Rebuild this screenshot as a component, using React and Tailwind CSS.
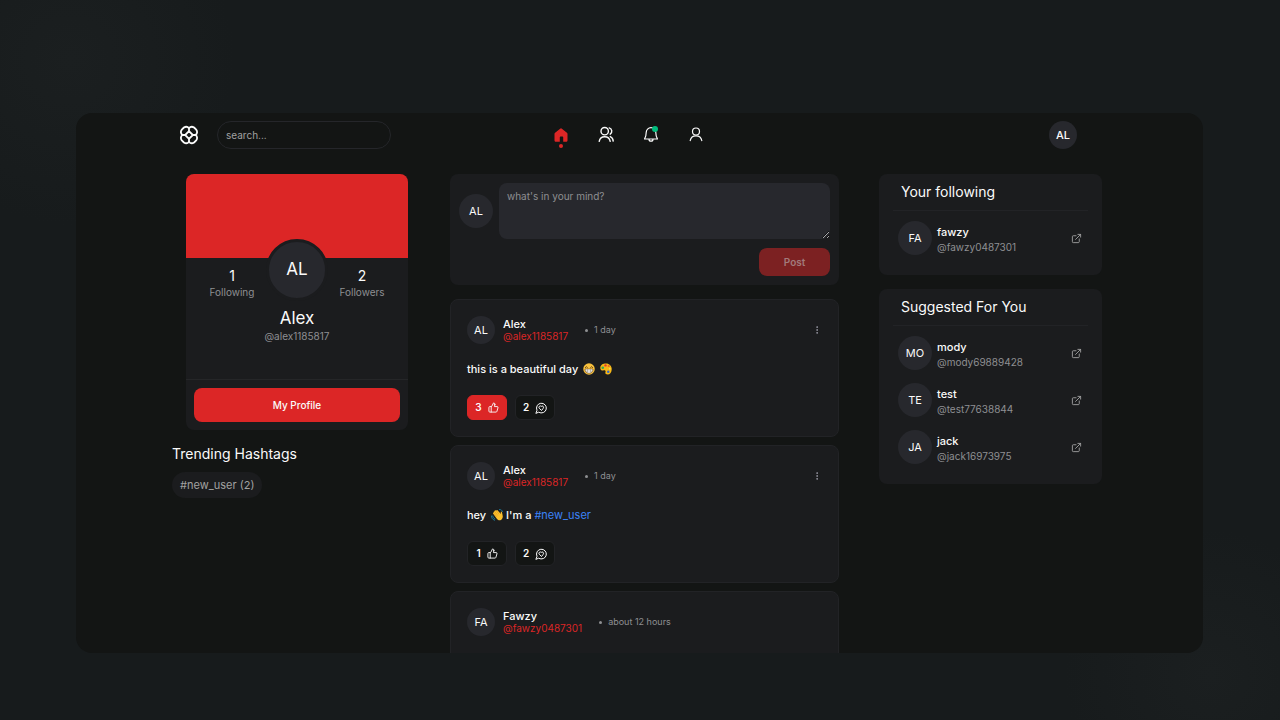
import React from "react";
import { ThumbsUp, ExternalLink, EllipsisVertical } from "lucide-react";

function Logo() {
  return (
    <svg className="size-5" viewBox="0 0 20 20" fill="none" stroke="#fafafa" strokeWidth="1.8" strokeLinejoin="round" strokeLinecap="round" aria-hidden="true">
      <path d="M10 3.300C8.800 1.700 6.600 1.400 4.900 2.500L2.800 4.600C1.400 6.300 1.700 8.700 3.300 10 1.700 11.300 1.400 13.700 2.800 15.400L4.900 17.500C6.600 18.600 8.800 18.300 10 16.700 11.200 18.300 13.400 18.600 15.100 17.500L17.200 15.400C18.600 13.700 18.300 11.300 16.700 10 18.300 8.700 18.600 6.300 17.200 4.600L15.100 2.500C13.400 1.400 11.200 1.700 10 3.300Z" />
      <path d="M10 6.200 13.800 10 10 13.800 6.200 10Z" />
      <path d="M10 3.500v2.700M10 13.800v2.700M3.500 10h2.700M13.800 10h2.700" />
    </svg>
  );
}

function CommentIcon() {
  return (
    <svg className="size-3" viewBox="0 0 24 24" fill="none" stroke="currentColor" strokeWidth="2" strokeLinecap="round" strokeLinejoin="round" aria-hidden="true">
      <path d="M2 22 4 16.500A9.800 9.800 0 1 1 8 20.800Z" />
      <path d="M12.500 16.500 8.400 12.300A2.700 2.700 0 0 1 12.500 8.800 2.700 2.700 0 0 1 16.600 12.300Z" />
    </svg>
  );
}

function GrinEmoji() {
  return (
    <svg className="ml-0.5 inline-block size-3 align-[-2px]" viewBox="0 0 24 24" role="img" aria-label="grinning face">
      <circle cx="12" cy="12" r="11.5" fill="#f8c13d" />
      <path d="M4.500 9q2-4 4.500 0M15 9q2.500-4 4.500 0" fill="none" stroke="#5c3b12" strokeWidth="1.800" strokeLinecap="round" />
      <path d="M4 12h16c0 5-3 8.500-8 8.500S4 17 4 12Z" fill="#fff" stroke="#6b4517" strokeWidth="1.300" />
      <path d="M4.500 16h15M9 12.500v7M15 12.500v7" stroke="#8d8478" strokeWidth="1" />
    </svg>
  );
}

function PaletteEmoji() {
  return (
    <svg className="ml-0.5 inline-block size-3 align-[-2px]" viewBox="0 0 24 24" role="img" aria-label="artist palette">
      <path d="M1 12C-1 5 5 1 12 1c7 0 11.500 5 11.500 11 0 7-3.500 11-8 11-4.500 0-5.500-2.500-4.500-5 1-2.500-1-4-3.500-3.500C5 15.500 2 15 1 12Z" fill="#f9b816" />
      <circle cx="5.500" cy="9.500" r="2.600" fill="#37a853" />
      <circle cx="11" cy="4.800" r="2.400" fill="#e23b30" />
      <circle cx="17.500" cy="6" r="2.200" fill="#e8642c" />
      <circle cx="19.500" cy="11.500" r="1.800" fill="#f4e04a" />
      <circle cx="16.500" cy="17.500" r="2.500" fill="#2f67c9" />
    </svg>
  );
}

function WaveEmoji() {
  return (
    <svg className="ml-0.5 inline-block size-3 align-[-2px]" viewBox="0 0 24 24" role="img" aria-label="waving hand">
      <path d="m4 9 8 11c3 4 8 3 10 0 3-4 1-8 0-13-.5-3-3-2-2.500 0l.3 3L13 2.500c-1-1.500-3-.5-2 1L9.500 3C8.500 1.800 6.500 3 7.500 4.500L6 5C5 6 5 6.500 5.500 7.500 4.500 7.500 3.500 8 4 9Z" fill="#fbc02d" />
      <path d="m11 4 5 6.500M7.500 5l6 8M5.500 8l6 7.500" stroke="#d98a1b" strokeWidth="1" fill="none" />
      <path d="M1 14c0 4 2 7 6 8.500M3.500 14c.5 3 1.500 4.500 4 6M17 1c3 0 5 1.500 6 4" stroke="#1f86a8" strokeWidth="1.700" fill="none" strokeLinecap="round" />
    </svg>
  );
}

function Avatar({ children, className = "size-[34px] text-[11px]" }) {
  return (
    <div className={`flex shrink-0 items-center justify-center rounded-full bg-[#27282d] text-zinc-50 ${className}`}>
      {children}
    </div>
  );
}

function Header() {
  return (
    <header className="grid grid-cols-[1fr_auto_1fr] items-center pt-2 pr-[126px] pl-[103px]">
      <div className="flex items-center gap-[18px]">
        <a href="#home" aria-label="Home page"><Logo /></a>
        <input
          type="search"
          aria-label="Search"
          placeholder="search..."
          className="h-7 w-[174px] rounded-full border border-[#25262a] bg-transparent px-2 text-[10px] text-zinc-50 outline-none placeholder:text-[#a1a1a1]"
        />
      </div>
      <nav className="flex items-center gap-[27px] text-zinc-50">
        <a href="#home" aria-label="Home" className="relative">
          <svg className="size-[18px]" viewBox="0 0 18 18" fill="#dc2626" aria-hidden="true">
            <path d="M8.100 2.700a1.400 1.400 0 0 1 1.800 0l5 4c.4.300.6.800.6 1.300v6.200c0 .9-.7 1.600-1.600 1.600H11.200v-4.200c0-.6-.4-1-1-1H8.800c-.6 0-1 .4-1 1v4.200H4.100c-.9 0-1.600-.7-1.600-1.600V8c0-.5.2-1 .6-1.300Z" />
          </svg>
          <span className="absolute top-[18px] left-[7px] h-1 w-1 rounded-full bg-[#dc2626]" />
        </a>
        <a href="#people" aria-label="People">
          <svg className="size-[18px]" viewBox="0 0 18 18" fill="none" stroke="currentColor" strokeWidth="1.400" strokeLinecap="round" aria-hidden="true">
            <circle cx="7.700" cy="5.200" r="3.700" />
            <path d="M2.200 15.300a5.600 5.600 0 0 1 11 0M12.200 1.900a3.500 3.500 0 0 1 1 6.300M13.300 10.600a5.300 5.300 0 0 1 2.900 4.500" />
          </svg>
        </a>
        <a href="#notifications" aria-label="Notifications" className="relative">
          <svg className="size-[18px]" viewBox="0 0 18 18" fill="none" stroke="currentColor" strokeWidth="1.200" strokeLinecap="round" strokeLinejoin="round" aria-hidden="true">
            <path d="M4.200 6.500A4.800 4.800 0 0 1 9 1.700a4.800 4.800 0 0 1 4.800 4.800c0 3.800.8 5 1.700 6.500H2.500c.9-1.500 1.700-2.700 1.700-6.500ZM7 13.200a2 2 0 0 0 4 0" />
          </svg>
          <span className="absolute top-0 right-0.5 size-1.5 rounded-full bg-emerald-500" />
        </a>
        <a href="#profile" aria-label="Profile">
          <svg className="size-[18px]" viewBox="0 0 18 18" fill="none" stroke="currentColor" strokeWidth="1.200" strokeLinecap="round" aria-hidden="true">
            <circle cx="9" cy="5.500" r="3.500" />
            <path d="M3.200 14.700a5.900 5.900 0 0 1 11.600 0" />
          </svg>
        </a>
      </nav>
      <button type="button" aria-label="Account menu" className="justify-self-end">
        <Avatar className="size-7 text-[11px] font-medium">AL</Avatar>
      </button>
    </header>
  );
}

function Stat({ value, label }) {
  return (
    <div className="w-14 pt-[29px] text-center">
      <p className="text-sm leading-4 text-zinc-50">{value}</p>
      <p className="text-[10px] leading-4 text-[#8e8f92]">{label}</p>
    </div>
  );
}

function ProfileCard() {
  return (
    <section className="mr-0.5 ml-3.5 overflow-hidden rounded-lg bg-[#1b1c1e]">
      <div className="h-[84px] bg-[#dc2626]" />
      <div className="-mt-[19px] flex items-start justify-center gap-1.5">
        <Stat value="1" label="Following" />
        <Avatar className="size-[62px] border-3 border-[#1b1c1e] text-[17px]">AL</Avatar>
        <Stat value="2" label="Followers" />
      </div>
      <div className="pt-[7px] pb-[35px] text-center">
        <h1 className="text-[17px] leading-5 text-zinc-50">Alex</h1>
        <p className="text-[10px] leading-4 text-[#8e8f92]">@alex1185817</p>
      </div>
      <div className="border-t border-[#252628] p-2">
        <button type="button" className="h-[34px] w-full rounded-lg bg-[#dc2626] text-[10px] font-medium text-zinc-50">My Profile</button>
      </div>
    </section>
  );
}

function Composer() {
  return (
    <form className="rounded-lg bg-[#1b1c1e] p-[9px]" onSubmit={(e) => e.preventDefault()}>
      <div className="flex items-center gap-1.5">
        <Avatar>AL</Avatar>
        <textarea
          aria-label="New post"
          placeholder="what's in your mind?"
          className="block h-14 min-w-0 flex-1 rounded-lg bg-[#27282d] px-2 py-[5px] text-[10px] leading-4 text-zinc-50 outline-none placeholder:text-[#8e8f92]"
        />
      </div>
      <div className="mt-[9px] flex justify-end">
        <button type="submit" disabled className="h-7 w-[71px] rounded-lg bg-[#7c2122] text-[10px] font-semibold text-[#a27a7b]">Post</button>
      </div>
    </form>
  );
}

function Post({ initials, name, handle, time, likes, comments, liked, children }) {
  return (
    <article className="flex flex-col gap-4 rounded-lg border border-[#222326] bg-[#1b1c1e] p-4">
      <div className="flex items-center">
        <Avatar className="size-7 text-[11px]">{initials}</Avatar>
        <div className="ml-2">
          <h3 className="text-[11px] leading-3 font-medium text-zinc-50">{name}</h3>
          <a href="#profile" className="block text-[10px] leading-3 text-[#dc2626]">{handle}</a>
        </div>
        <span className="ml-[17px] size-[3px] rounded-full bg-[#8e8f92]" />
        <time className="ml-1.5 text-[9px] text-[#8e8f92]">{time}</time>
        {likes && (
          <button type="button" aria-label="Post options" className="ml-auto text-zinc-400">
            <EllipsisVertical className="size-2.5" />
          </button>
        )}
      </div>
      <p className="text-[11px] leading-[19px] font-medium text-zinc-50">{children}</p>
      <div className="flex gap-2 text-[10px] font-semibold text-zinc-50">
        <button type="button" aria-label="Like" className={`flex h-[25px] w-10 items-center justify-center gap-1.5 rounded-md border ${liked ? "border-[#dc2626] bg-[#dc2626]" : "border-[#222326] bg-[#131514]"}`}>
          {likes}<ThumbsUp className="size-[11px]" />
        </button>
        <button type="button" aria-label="Comments" className="flex h-[25px] w-10 items-center justify-center gap-1.5 rounded-md border border-[#222326] bg-[#131514]">
          {comments}<CommentIcon />
        </button>
      </div>
    </article>
  );
}

function PeopleCard({ title, people }) {
  return (
    <section className="rounded-lg bg-[#1b1c1e] px-3.5 pb-5">
      <h2 className="border-b border-[#222326] px-2 py-2 text-sm leading-5 text-zinc-50">{title}</h2>
      <ul className="flex flex-col gap-[13px] pt-2.5 pr-1.5 pl-[5px]">
        {people.map(([initials, name, handle]) => (
          <li key={handle} className="flex items-center">
            <Avatar>{initials}</Avatar>
            <div className="ml-[5px] flex-1 pt-[3px]">
              <p className="text-[11px] leading-[15px] font-medium text-zinc-50">{name}</p>
              <p className="text-[10px] leading-[15px] text-[#8e8f92]">{handle}</p>
            </div>
            <a href="#profile" aria-label={`Open ${name}`} className="text-[#a1a1a1]">
              <ExternalLink className="size-[11px]" />
            </a>
          </li>
        ))}
      </ul>
    </section>
  );
}

export default function App() {
  return (
    <div className="flex h-screen flex-col bg-[#171b1c] bg-[radial-gradient(circle_at_70px_60px,#1b1f20_0,transparent_165px),radial-gradient(circle_at_calc(100%_-_70px)_calc(100%_-_45px),#1b1f20_0,transparent_145px)] pt-[113px] pr-[77px] pb-[67px] pl-19 font-['Inter',sans-serif]">
      <div className="min-h-0 flex-1 overflow-hidden rounded-2xl bg-[#131514]">
        <Header />
        <main className="grid grid-cols-[238px_1fr_223px] gap-10 pt-[25px] pr-[101px] pl-24">
          <aside>
            <ProfileCard />
            <h2 className="mt-3.5 text-sm leading-5 text-zinc-50">Trending Hashtags</h2>
            <a href="#new_user" className="mt-2 inline-block rounded-full bg-[#1b1c1e] px-2 text-[11px] leading-[26px] text-[#a1a1a1]">#new_user (2)</a>
          </aside>
          <div>
            <Composer />
            <div className="mt-3.5 flex flex-col gap-2">
              <Post initials="AL" name="Alex" handle="@alex1185817" time="1 day" likes="3" comments="2" liked>
                this is a beautiful day <GrinEmoji /> <PaletteEmoji />
              </Post>
              <Post initials="AL" name="Alex" handle="@alex1185817" time="1 day" likes="1" comments="2">
                hey <WaveEmoji /> I'm a <a href="#new_user" className="font-normal text-[#3b82f6]">#new_user</a>
              </Post>
              <Post initials="FA" name="Fawzy" handle="@fawzy0487301" time="about 12 hours" />
            </div>
          </div>
          <aside className="flex flex-col gap-3.5">
            <PeopleCard title="Your following" people={[["FA", "fawzy", "@fawzy0487301"]]} />
            <PeopleCard
              title="Suggested For You"
              people={[
                ["MO", "mody", "@mody69889428"],
                ["TE", "test", "@test77638844"],
                ["JA", "jack", "@jack16973975"],
              ]}
            />
          </aside>
        </main>
      </div>
    </div>
  );
}
